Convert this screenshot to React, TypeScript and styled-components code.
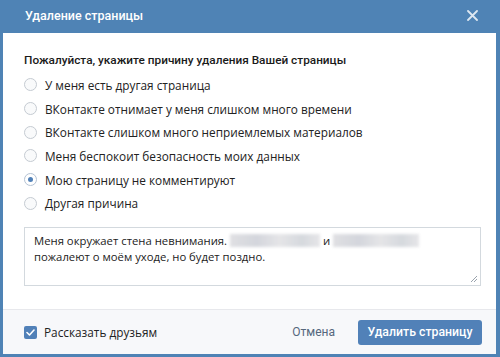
import styled, { createGlobalStyle } from 'styled-components';

const GlobalStyle = createGlobalStyle`
  html, body {
    margin: 0;
    padding: 0;
    background: #ffffff;
  }
  body {
    font-family: "Open Sans", "Liberation Sans", sans-serif;
  }
`;

const Frame = styled.div`
  width: 500px;
  height: 357px;
  box-sizing: border-box;
  background: #4f83b5;
  padding: 0 4px 3px 3px;
  display: flex;
  flex-direction: column;
`;

const Header = styled.div`
  height: 33px;
  flex: none;
  display: flex;
  align-items: center;
  justify-content: space-between;
  padding: 0 17px 3px 22px;
  box-sizing: border-box;
`;

const Title = styled.div`
  font-family: Roboto, "Liberation Sans", sans-serif;
  font-weight: 500;
  font-size: 12.5px;
  color: #ffffff;
`;

const CloseButton = styled.button`
  background: transparent;
  border: none;
  padding: 0;
  width: 14px;
  height: 14px;
  display: flex;
  align-items: center;
  justify-content: center;
  cursor: pointer;
`;

const Body = styled.div`
  flex: 1;
  background: #ffffff;
  padding: 19px 15px 23px 21px;
  display: flex;
  flex-direction: column;
`;

const Question = styled.div`
  font-family: Roboto, "Liberation Sans", sans-serif;
  font-size: 11.8px;
  font-weight: 500;
  color: #1a1a1a;
  line-height: 16px;
  margin-bottom: 5px;
`;

const RadioList = styled.div`
  display: flex;
  flex-direction: column;
  margin-bottom: 12px;
`;

const RadioRow = styled.label`
  height: 23.7px;
  display: flex;
  align-items: center;
  gap: 8px;
  font-size: 11.8px;
  color: #222222;
  cursor: pointer;
`;

const RadioMark = styled.span<{ $checked?: boolean }>`
  width: 13px;
  height: 13px;
  box-sizing: border-box;
  border-radius: 50%;
  border: 1px solid ${(p) => (p.$checked ? '#b5c3d4' : '#c5cbd2')};
  background: ${(p) => (p.$checked ? '#ffffff' : '#f9fafb')};
  display: flex;
  align-items: center;
  justify-content: center;
  flex: none;

  &::after {
    content: '';
    width: 5px;
    height: 5px;
    border-radius: 50%;
    background: #5181b8;
    display: ${(p) => (p.$checked ? 'block' : 'none')};
  }
`;

const TextBox = styled.div`
  height: 59px;
  box-sizing: border-box;
  border: 1px solid #d3d9de;
  padding: 5px 9px;
  font-size: 11.3px;
  line-height: 15.5px;
  color: #222222;
  position: relative;
`;

const Blurred = styled.span<{ $w: number }>`
  display: inline-block;
  width: ${(p) => p.$w}px;
  height: 13px;
  vertical-align: -2px;
  background: linear-gradient(90deg, #d8d8dc, #c9ccd4 30%, #dfdfe2 55%, #ccd0d6 80%, #e0e0e3);
  filter: blur(1.5px);
  opacity: 0.8;
`;

const Grip = styled.svg`
  position: absolute;
  right: 2px;
  bottom: 2px;
`;

const Footer = styled.div`
  height: 45px;
  flex: none;
  box-sizing: border-box;
  background: #f7f8fa;
  border-top: 1px solid #e7e8ec;
  display: flex;
  align-items: center;
  padding: 0 14px 0 21px;
`;

const CheckLabel = styled.label`
  display: flex;
  align-items: center;
  gap: 7px;
  font-size: 11.8px;
  color: #222222;
  flex: 1;
`;

const CheckBox = styled.span`
  width: 13px;
  height: 13px;
  border-radius: 2px;
  background: #5181b8;
  display: flex;
  align-items: center;
  justify-content: center;
`;

const CancelButton = styled.button`
  background: transparent;
  border: none;
  font-family: Roboto, "Liberation Sans", sans-serif;
  font-size: 12px;
  color: #55677d;
  padding: 0;
  margin-right: 23px;
  cursor: pointer;
`;

const PrimaryButton = styled.button`
  background: #5181b8;
  border: none;
  border-radius: 3px;
  color: #ffffff;
  font-family: Roboto, "Liberation Sans", sans-serif;
  font-weight: 500;
  font-size: 12.3px;
  height: 25px;
  width: 124px;
  padding: 0;
  cursor: pointer;
`;

const reasons = [
  'У меня есть другая страница',
  'ВКонтакте отнимает у меня слишком много времени',
  'ВКонтакте слишком много неприемлемых материалов',
  'Меня беспокоит безопасность моих данных',
  'Мою страницу не комментируют',
  'Другая причина',
];

export default function App() {
  const selected = 4;
  return (
    <>
      <GlobalStyle />
      <Frame>
        <Header>
          <Title>Удаление страницы</Title>
          <CloseButton aria-label="Закрыть">
            <svg width="11" height="11" viewBox="0 0 11 11">
              <path d="M1 1 L10 10 M10 1 L1 10" stroke="#dde7f1" strokeWidth="1.8" strokeLinecap="round" />
            </svg>
          </CloseButton>
        </Header>
        <Body>
          <Question>Пожалуйста, укажите причину удаления Вашей страницы</Question>
          <RadioList>
            {reasons.map((r, i) => (
              <RadioRow key={r}>
                <RadioMark $checked={i === selected} />
                {r}
              </RadioRow>
            ))}
          </RadioList>
          <TextBox>
            Меня окружает стена невнимания. <Blurred $w={90} /> и <Blurred $w={86} />
            <br />
            пожалеют о моём уходе, но будет поздно.
            <Grip width="8" height="8" viewBox="0 0 8 8">
              <path d="M7 1 L1 7 M7 4 L4 7" stroke="#9aa3ad" strokeWidth="1" />
            </Grip>
          </TextBox>
        </Body>
        <Footer>
          <CheckLabel>
            <CheckBox>
              <svg width="9" height="7" viewBox="0 0 9 7">
                <path d="M1 3.5 L3.5 6 L8 1" stroke="#ffffff" strokeWidth="1.6" fill="none" strokeLinecap="round" strokeLinejoin="round" />
              </svg>
            </CheckBox>
            Рассказать друзьям
          </CheckLabel>
          <CancelButton>Отмена</CancelButton>
          <PrimaryButton>Удалить страницу</PrimaryButton>
        </Footer>
      </Frame>
    </>
  );
}
